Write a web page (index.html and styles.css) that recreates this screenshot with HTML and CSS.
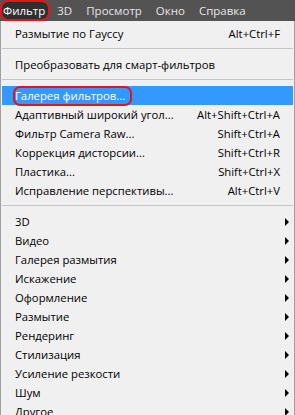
FILE: index.html
```html
<!DOCTYPE html>
<html lang="ru">
<head>
    <meta charset="UTF-8">
    <title>Фильтр</title>
    <link rel="stylesheet" href="styles.css">
</head>
<body>
    <div class="menubar">
        <span class="top-item active">Фильтр</span>
        <span class="top-item">3D</span>
        <span class="top-item">Просмотр</span>
        <span class="top-item">Окно</span>
        <span class="top-item">Справка</span>
    </div>

    <div class="menu">
        <div class="row"><span class="label">Размытие по Гауссу</span><span class="key">Alt+Ctrl+F</span></div>
        <div class="sep"></div>
        <div class="row"><span class="label">Преобразовать для смарт-фильтров</span></div>
        <div class="sep"></div>
        <div class="row selected"><span class="label marked">Галерея фильтров...</span></div>
        <div class="row"><span class="label">Адаптивный широкий угол...</span><span class="key">Alt+Shift+Ctrl+A</span></div>
        <div class="row"><span class="label">Фильтр Camera Raw...</span><span class="key">Shift+Ctrl+A</span></div>
        <div class="row"><span class="label">Коррекция дисторсии...</span><span class="key">Shift+Ctrl+R</span></div>
        <div class="row"><span class="label">Пластика...</span><span class="key">Shift+Ctrl+X</span></div>
        <div class="row"><span class="label">Исправление перспективы...</span><span class="key">Alt+Ctrl+V</span></div>
        <div class="sep"></div>
        <div class="row sub"><span class="label">3D</span><span class="arrow"></span></div>
        <div class="row sub"><span class="label">Видео</span><span class="arrow"></span></div>
        <div class="row sub"><span class="label">Галерея размытия</span><span class="arrow"></span></div>
        <div class="row sub"><span class="label">Искажение</span><span class="arrow"></span></div>
        <div class="row sub"><span class="label">Оформление</span><span class="arrow"></span></div>
        <div class="row sub"><span class="label">Размытие</span><span class="arrow"></span></div>
        <div class="row sub"><span class="label">Рендеринг</span><span class="arrow"></span></div>
        <div class="row sub"><span class="label">Стилизация</span><span class="arrow"></span></div>
        <div class="row sub"><span class="label">Усиление резкости</span><span class="arrow"></span></div>
        <div class="row sub"><span class="label">Шум</span><span class="arrow"></span></div>
        <div class="row sub"><span class="label">Другое</span><span class="arrow"></span></div>
    </div>
</body>
</html>
```

FILE: styles.css
```css
body {
    margin: 0;
    padding: 0;
    background-color: #f0f0f0;
    font-family: "Open Sans", "Noto Sans", sans-serif;
    font-size: 11.3px;
    overflow: hidden;
}
.menubar {
    display: flex;
    align-items: center;
    height: 21px;
    background-color: #535353;
    padding-left: 2px;
}
.top-item {
    color: #e6e6e6;
    font-size: 11.5px;
    padding: 0 7px;
    line-height: 17px;
}
.active {
    background-color: #2f2f2f;
    color: #ffffff;
    outline: 2px solid #e3141c;
    border-radius: 6px;
    margin-right: 2px;
    padding: 0 3px 0 1px;
}
.menu {
    border: 1px solid #a0a0a0;
    border-top: none;
    background-color: #f0f0f0;
    padding-top: 3px;
    height: 391px;
}
.row {
    display: flex;
    align-items: center;
    justify-content: space-between;
    height: 19px;
    padding: 0 14px 0 14px;
    color: #000000;
}
.selected {
    background-color: #3399ff;
    color: #ffffff;
    margin: 0 1px;
    padding-left: 13px;
}
.marked {
    border: 2px solid #e3141c;
    border-radius: 7px;
    margin-left: -2px;
    padding: 0 5px 0 0;
    line-height: 16px;
}
.sub {
    padding-right: 5px;
}
.arrow {
    width: 0;
    height: 0;
    border-top: 4px solid transparent;
    border-bottom: 4px solid transparent;
    border-left: 4px solid #000000;
}
.sep {
    height: 1px;
    background-color: #c4c4c4;
    margin: 5px 1px 6px 1px;
}
```
